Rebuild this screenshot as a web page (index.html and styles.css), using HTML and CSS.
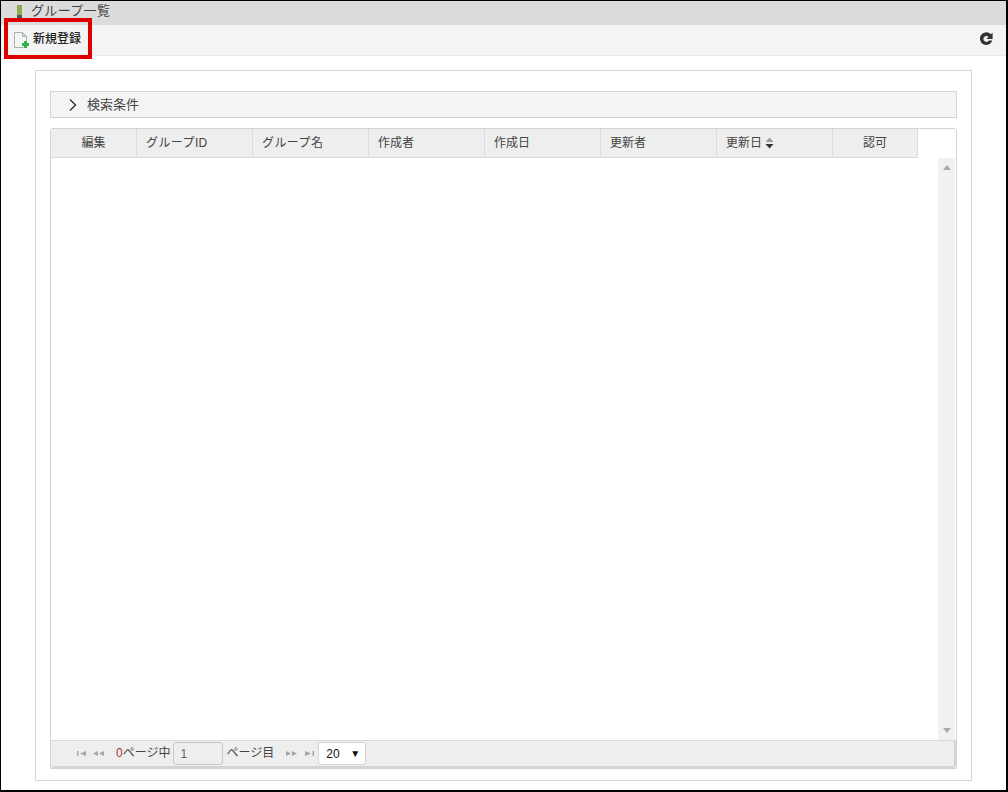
FILE: index.html
```html
<!DOCTYPE html>
<html lang="ja">
<head>
<meta charset="utf-8">
<title>グループ一覧</title>
<link rel="stylesheet" href="styles.css">
</head>
<body>
<div class="frame">
  <div class="titlebar"><span class="title-mark"></span><span class="title-text">グループ一覧</span></div>
  <div class="toolbar">
    <a class="new-btn">
      <svg class="new-icon" width="16" height="18" viewBox="0 0 16 18">
        <path d="M1.5 1.5H9.5L13.5 5.5V16.5H1.5Z" fill="#f4f6f4" stroke="#a9b3ad"/>
        <path d="M9.5 1.5V5.5H13.5Z" fill="#d5dcd8" stroke="#a9b3ad"/>
        <path d="M9 12H11V10H14V12H16V15H14V17H11V15H9Z" fill="#2fb344"/>
      </svg>
      <span class="new-label">新規登録</span>
    </a>
    <svg class="reload" width="14" height="14" viewBox="0 0 14 14">
      <path d="M13.6 0.6V7H7.2L9.5 4.9A2.9 2.9 0 1 0 9.9 8.6H13.4A6.4 6.4 0 1 1 12 2.2Z" fill="#333"/>
    </svg>
  </div>
  <div class="highlight"></div>
  <main class="content">
    <section class="panel">
      <div class="search">
        <svg class="chevron" width="10" height="14" viewBox="0 0 10 14"><path d="M2 1.5L7.5 7L2 12.5" fill="none" stroke="#333" stroke-width="1.4"/></svg>
        <span class="search-label">検索条件</span>
      </div>
      <div class="grid">
        <div class="head">
          <div class="cell c-edit">編集</div>
          <div class="cell wide">グループID</div>
          <div class="cell wide">グループ名</div>
          <div class="cell">作成者</div>
          <div class="cell">作成日</div>
          <div class="cell">更新者</div>
          <div class="cell">更新日<svg class="sort" width="9" height="12" viewBox="0 0 9 12"><path d="M4.5 0.5L8.5 5H0.5Z" fill="#999"/><path d="M0.5 7H8.5L4.5 11.5Z" fill="#333"/></svg></div>
          <div class="cell c-auth">認可</div>
        </div>
        <div class="body">
          <div class="scroll">
            <svg width="8" height="5" viewBox="0 0 8 5"><path d="M4 0L8 5H0Z" fill="#aaa"/></svg>
            <svg width="8" height="5" viewBox="0 0 8 5"><path d="M0 0H8L4 5Z" fill="#aaa"/></svg>
          </div>
        </div>
        <div class="pager">
          <svg class="nav" width="9" height="5" viewBox="0 0 9 5"><path d="M0 0H1.5V5H0ZM9 0V5L3 2.5Z" fill="#a5a5a5"/></svg>
          <svg class="nav nav-prev" width="11" height="5" viewBox="0 0 11 5"><path d="M5 0V5L0 2.5ZM11 0V5L6 2.5Z" fill="#a5a5a5"/></svg>
          <span class="count"><span class="zero">0</span>ページ中</span>
          <input class="page-input" type="text" value="1">
          <span class="page-label">ページ目</span>
          <svg class="nav nav-next" width="11" height="5" viewBox="0 0 11 5"><path d="M0 0V5L5 2.5ZM6 0V5L11 2.5Z" fill="#a5a5a5"/></svg>
          <svg class="nav nav-last" width="9" height="5" viewBox="0 0 9 5"><path d="M0 0V5L6 2.5ZM7.5 0H9V5H7.5Z" fill="#a5a5a5"/></svg>
          <div class="select"><span>20</span><span class="arrow">▼</span></div>
        </div>
      </div>
    </section>
  </main>
</div>
</body>
</html>
```
FILE: styles.css
```css
* { box-sizing: border-box; }
html, body { margin: 0; padding: 0; height: 100%; background: #000; overflow: hidden; }
body {
  font-family: "Liberation Sans", "Noto Sans CJK JP", sans-serif;
  font-size: 12px;
  color: #333;
}
.frame {
  position: relative;
  width: 1005px;
  height: 789px;
  margin: 1px 0 0 1px;
  background: #fff;
  display: flex;
  flex-direction: column;
}
.titlebar {
  height: 24px;
  background: #dcdcdc;
  display: flex;
  align-items: center;
  padding-left: 16px;
  flex: none;
}
.title-mark {
  width: 5px;
  height: 15px;
  align-self: flex-end;
  margin-bottom: 5px;
  background: linear-gradient(#8bab52 0, #8bab52 65%, #555 65%);
}
.title-text {
  margin-left: 9px;
  padding-bottom: 8px;
  font-size: 13px;
  letter-spacing: 0.35px;
  color: #444;
}
.toolbar {
  height: 31px;
  flex: none;
  background: #f4f4f4;
  border-bottom: 1px solid #eaeaea;
  display: flex;
  align-items: center;
  justify-content: space-between;
  padding: 0 12px 2px 12px;
}
.new-btn { display: flex; align-items: center; font-weight: 500; color: #222; }
.new-icon { margin-right: 4px; margin-top: 2px; }
.new-label { padding-bottom: 4px; }
.reload { margin-right: 1px; }
.highlight {
  position: absolute;
  left: 3px;
  top: 17px;
  width: 88px;
  height: 41px;
  border: 4px solid #dd0000;
}
.content { flex: 1; padding: 14px 34px 9px; min-height: 0; }
.panel {
  height: 100%;
  border: 1px solid #d8d8d8;
  padding: 20px 14px 11px;
  display: flex;
  flex-direction: column;
}
.search {
  height: 27px;
  flex: none;
  background: #f4f4f4;
  border: 1px solid #d4d4d4;
  display: flex;
  align-items: center;
  padding-left: 17px;
  font-size: 13px;
  color: #444;
}
.chevron { margin-right: 9px; }
.search-label { padding-bottom: 2px; }
.grid {
  flex: 1;
  min-height: 0;
  margin-top: 10px;
  border: 1px solid #d4d4d4;
  border-radius: 3px 3px 0 0;
  display: flex;
  flex-direction: column;
}
.head { display: flex; height: 29px; flex: none; }
.cell {
  width: 116px;
  background: #eeeeee;
  border-right: 1px solid #d9dcdf;
  border-bottom: 1px solid #d9dcdf;
  padding: 0 0 4px 9px;
  display: flex;
  align-items: center;
  color: #444;
}
.wide { letter-spacing: 0.4px; }
.c-edit { width: 86px; padding-left: 0; justify-content: center; }
.c-auth { width: 85px; padding-left: 0; justify-content: center; }
.sort { margin-left: 3px; margin-top: 4px; }
.body { flex: 1; min-height: 0; display: flex; justify-content: flex-end; padding-right: 1px; }
.scroll {
  width: 17px;
  background: #f1f1f1;
  display: flex;
  flex-direction: column;
  align-items: center;
  justify-content: space-between;
  padding: 7px 0;
}
.pager {
  height: 28px;
  flex: none;
  background: #eeeeee;
  border-top: 1px solid #d9dcdf;
  border-right: 2px solid #d4d4d4;
  border-bottom: 2px solid #d4d4d4;
  border-radius: 0 0 3px 3px;
  display: flex;
  align-items: center;
  padding-left: 26px;
}
.nav { flex: none; }
.nav-prev { margin-left: 7px; }
.count { margin-left: 12px; margin-right: 3px; padding-bottom: 4px; color: #444; }
.zero { color: #a33; }
.page-input {
  width: 50px;
  height: 23px;
  border: 1px solid #c8c8c8;
  border-radius: 3px;
  background: #eeeeee;
  padding: 0 6px;
  font: inherit;
  color: #666;
}
.page-label { margin-left: 3px; padding-bottom: 4px; color: #444; }
.nav-next { margin-left: 12px; }
.nav-last { margin-left: 8px; }
.select {
  width: 48px;
  height: 23px;
  margin-left: 4px;
  background: #fff;
  border: 1px solid #d4d4d4;
  border-radius: 3px;
  display: flex;
  align-items: center;
  justify-content: space-between;
  padding: 0 5px 0 7px;
  color: #111;
}
.arrow { font-size: 10px; }
```
